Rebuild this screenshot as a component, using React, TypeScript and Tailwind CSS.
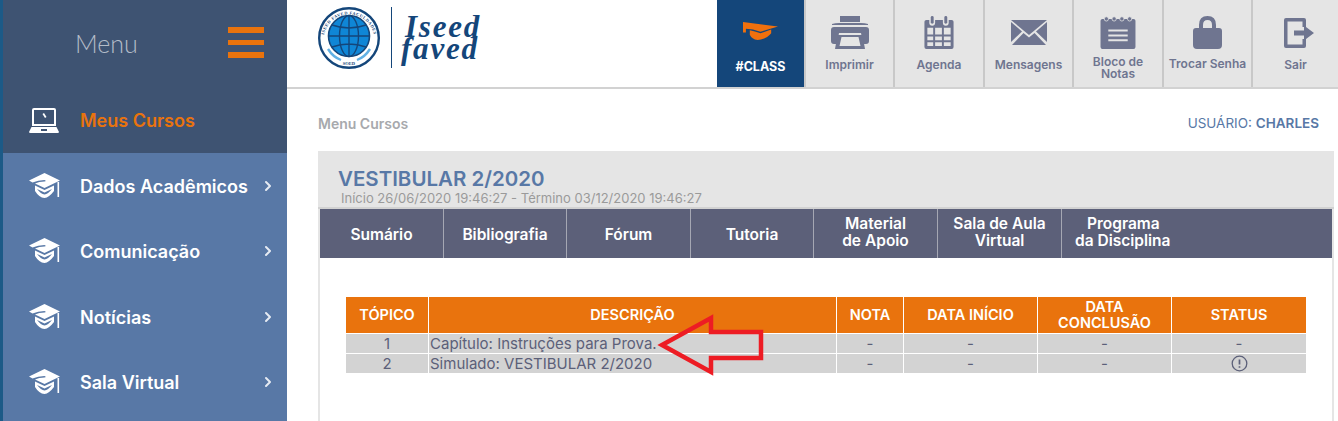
import React from 'react';
import { ChevronRight } from 'lucide-react';

const GradCap = () => (
  <svg width="32" height="26" viewBox="0 0 32 26" fill="white">
    <path d="M15.5 0 L31 7.5 L15.5 15 L6 10.5 Q10 8.5 15.5 8.5 L17 8 L15.5 7 Q9 7 3.5 9.5 L0 7.5 Z" />
    <path d="M6 12.5 L15.5 17 L25 12.5 L25 18 Q20 24.5 15.5 25 Q10 24.5 6 18 Z M8 16 Q12 21 15.5 21.5 Q19 21 23 16 L15.5 19.5 Z" fillRule="evenodd" />
    <rect x="28.5" y="9" width="1.6" height="15" />
  </svg>
);

const Laptop = () => (
  <svg width="30" height="25" viewBox="0 0 30 25" fill="white">
    <path fillRule="evenodd" d="M3 2 Q3 0 5 0 L25 0 Q27 0 27 2 L27 18 L3 18 Z M5 2 L5 16 L25 16 L25 2 Z" />
    <path d="M13.5 6 L15 5 L17.5 9 L16 10 Z" />
    <path fillRule="evenodd" d="M2.5 19 L27.5 19 L30 24 Q30 25 28.5 25 L1.5 25 Q0 25 0 24 Z M12 21 L12 23 L18 23 L18 21 Z" />
  </svg>
);

const SideItem = ({ label }: { label: string }) => (
  <div className="h-[65.5px] flex items-center pl-[26px] pr-[11px]">
    <GradCap />
    <span className="ml-[19px] pt-[1px] flex-1 text-[18px] font-semibold text-white">{label}</span>
    <ChevronRight size={16} strokeWidth={3} className="text-[#e6ebf3]" />
  </div>
);

const Sidebar = () => (
  <aside className="w-[287px] shrink-0 h-[421px] overflow-hidden bg-[#5878a6] border-l-[3px] border-[#1c5a87]">
    <div className="h-[87px] flex bg-[#3e5372]">
      <div className="w-[282px] flex items-center pl-[72px] pr-[21px] justify-between">
        <span className="text-[25px] font-light text-[#b4bcc8] leading-none font-['Lato',sans-serif]">Menu</span>
        <div className="w-[36px] flex flex-col gap-[7px] mt-[-3px]">
          <div className="h-[6px] bg-[#e9730d]" />
          <div className="h-[5px] bg-[#e9730d]" />
          <div className="h-[6px] bg-[#e9730d]" />
        </div>
      </div>
    </div>
    <div className="h-[66px] flex items-center pl-[26px] bg-[#3e5372]">
      <Laptop />
      <span className="ml-[21px] text-[18px] font-semibold text-[#e9730d]">Meus Cursos</span>
    </div>
    <SideItem label="Dados Acadêmicos" />
    <SideItem label="Comunicação" />
    <SideItem label="Notícias" />
    <SideItem label="Sala Virtual" />
  </aside>
);

const Logo = () => (
  <div className="flex items-center">
    <svg width="62" height="62" viewBox="0 0 62 62">
      <circle cx="31" cy="31" r="29.8" fill="white" stroke="#14467a" strokeWidth="2.4" />
      <circle cx="31" cy="29" r="20.5" fill="#0f86d6" stroke="#14467a" strokeWidth="1.6" />
      <g fill="none" stroke="#14467a" strokeWidth="1.4">
        <ellipse cx="31" cy="29" rx="9.5" ry="20.5" />
        <path d="M31 8.5 V49.5 M10.5 29 H51.5 M14 18 Q31 24 48 18 M14 40 Q31 34 48 40" />
      </g>
      <path d="M10 42 Q15 50 23 53" fill="none" stroke="#62b1e4" strokeWidth="2.4" />
      <path d="M52 42 Q47 50 39 53" fill="none" stroke="#62b1e4" strokeWidth="2.4" />
      <text x="31" y="57.5" textAnchor="middle" fontSize="4.5" fontWeight="700" fill="#14467a" fontFamily="Liberation Serif">SOED</text>
      <path id="logoArc" d="M5.5 33 A25.5 25.5 0 0 1 56.5 33" fill="none" />
      <text fontSize="4.3" fontWeight="700" fill="#14467a" fontFamily="Liberation Serif" letterSpacing="0.5">
        <textPath href="#logoArc" startOffset="50%" textAnchor="middle">ISEED FAVED FACULDADES</textPath>
      </text>
    </svg>
    <div className="w-px h-[61px] bg-[#14467a] ml-[11px]" />
    <div className="ml-[9px] mt-[1px] text-[#14467a] text-[31px] leading-[22px] font-bold italic tracking-[1.8px] indent-[4px] font-['Liberation_Serif',serif]">
      Iseed<br />faved
    </div>
  </div>
);

const PrinterIcon = () => (
  <svg width="38" height="33" viewBox="0 0 38 33" fill="#6f7590">
    <path d="M9 0 H29 V6 H9 Z" />
    <path d="M1 8 Q4 7 8 7 H30 Q34 7 37 8 V9 H1 Z" />
    <path fillRule="evenodd" d="M3 11 H35 Q38 11 38 14 V25 Q38 28 35 28 H32 L30 17 H8 L6 28 H3 Q0 28 0 25 V14 Q0 11 3 11 Z" />
    <path fillRule="evenodd" d="M6.5 19 H31.5 L34 33 H4 Z M10.5 21 L8.5 30 H29.5 L27.5 21 Z" />
  </svg>
);

const CalendarIcon = () => (
  <svg width="30" height="33" viewBox="0 0 30 34" fill="#6f7590">
    <path fillRule="evenodd" d="M2 4 H5 V7 Q5 10 8 10 Q11 10 11 7 V4 H19 V7 Q19 10 22 10 Q25 10 25 7 V4 H28 Q30 4 30 6 V32 Q30 34 28 34 H2 Q0 34 0 32 V6 Q0 4 2 4 Z M3 12 V19 H9 V12 Z M11 12 V19 H18 V12 Z M20 12 V19 H27 V12 Z M3 21 V25 H9 V21 Z M11 21 V25 H18 V21 Z M20 21 V25 H27 V21 Z M3 27 V31 H9 V27 Z M11 27 V31 H18 V27 Z M20 27 V31 H27 V27 Z" />
    <rect x="6.5" y="0" width="3" height="8" rx="1.5" />
    <rect x="20.5" y="0" width="3" height="8" rx="1.5" />
  </svg>
);

const MailIcon = () => (
  <svg width="36" height="25" viewBox="0 0 36 25" fill="#6f7590">
    <path d="M0 0 H36 L18 15 Z" />
    <path d="M0 2 L11 11.5 L0 22 Z" />
    <path d="M36 2 L25 11.5 L36 22 Z" />
    <path d="M12.5 13 L18 17.5 L23.5 13 L35 25 H1 Z" />
  </svg>
);

const NotesIcon = () => (
  <svg width="36" height="33" viewBox="0 0 36 34" fill="#6f7590">
    <path fillRule="evenodd" d="M2 3 H34 Q36 3 36 5 V32 Q36 34 34 34 H2 Q0 34 0 32 V5 Q0 3 2 3 Z M8 14 V16 H28 V14 Z M8 19 V21 H28 V19 Z M8 24 V26 H28 V24 Z" />
    <g fill="#6f7590" stroke="#e5e5e5" strokeWidth="0.8">
      <circle cx="6" cy="3" r="2.2" />
      <circle cx="14" cy="3" r="2.2" />
      <circle cx="22" cy="3" r="2.2" />
      <circle cx="30" cy="3" r="2.2" />
    </g>
  </svg>
);

const LockIcon = () => (
  <svg width="29" height="33" viewBox="0 0 29 33" fill="#6f7590">
    <path fillRule="evenodd" d="M6 12 V9 Q6 0 14.5 0 Q23 0 23 9 V12 H26 Q29 12 29 15 V29 Q29 33 25 33 H4 Q0 33 0 29 V15 Q0 12 3 12 Z M10 12 H19 V9 Q19 4 14.5 4 Q10 4 10 9 Z" />
  </svg>
);

const ExitIcon = () => (
  <svg className="ml-[7px]" width="30" height="30" viewBox="0 0 30 30" fill="#6f7590">
    <path d="M2 0 H20 Q22 0 22 2 V9 H18.5 V3.5 H3.5 V26.5 H18.5 V21 H22 V28 Q22 30 20 30 H2 Q0 30 0 28 V2 Q0 0 2 0 Z" />
    <path d="M10 12.5 H20 V7.5 L30 15 L20 22.5 V17.5 H10 Z" />
  </svg>
);

const ClassCap = () => (
  <svg width="35" height="18" viewBox="0 0 36 24" preserveAspectRatio="none" fill="#f0700d">
    <path d="M0 0 L36 6 L18 13 Q10 9 3 9 L3 14 L0 14 Z" />
    <path d="M7 11 Q12 12 18 15 L29 10 L29 15 Q24 23 15 24 Q9 23 7 17 Z" />
  </svg>
);

const headerTabs = [
  { label: 'Imprimir', icon: PrinterIcon, width: 'w-[89px]', labelClass: 'mt-[7px]' },
  { label: 'Agenda', icon: CalendarIcon, width: 'w-[90px]', labelClass: 'mt-[7px]' },
  { label: 'Mensagens', icon: MailIcon, width: 'w-[89px]', labelClass: 'mt-[7px]' },
  { label: 'Bloco de\nNotas', icon: NotesIcon, width: 'w-[90px]', labelClass: 'mt-[10px]' },
  { label: 'Trocar Senha', icon: LockIcon, width: 'w-[89px]', labelClass: 'mt-[6px]' },
  { label: 'Sair', icon: ExitIcon, width: 'w-[87px]', labelClass: 'mt-[7px]' },
];

const Header = () => (
  <header className="h-[89px] flex justify-between border-b-2 border-[#d2d2d2] pl-[31px]">
    <div className="flex items-center pb-[12px]"><Logo /></div>
    <div className="flex">
      <div className="w-[87px] bg-[#14467a] flex flex-col items-center">
        <div className="mt-[22px] h-[18px]"><ClassCap /></div>
        <span className="mt-[21px] text-[12.5px] font-bold text-white leading-none">#CLASS</span>
      </div>
      {headerTabs.map((tab) => {
        const Icon = tab.icon;
        return (
          <div key={tab.label} className={`${tab.width} bg-[#e5e5e5] border-l-2 border-[#c8c8c8] flex flex-col items-center`}>
            <div className="mt-[16px] h-[33px] flex items-center justify-center"><Icon /></div>
            <span className={`${tab.labelClass} h-[18px] flex items-center text-center whitespace-pre-line text-[12px] leading-[12px] font-semibold text-[#6f7590]`}>{tab.label}</span>
          </div>
        );
      })}
    </div>
  </header>
);

const courseTabs = [
  { label: 'Sumário', width: 'w-[124px]', offset: 'pt-[2px]' },
  { label: 'Bibliografia', width: 'w-[123px]', offset: 'pt-[2px]' },
  { label: 'Fórum', width: 'w-[124px]', offset: 'pt-[2px]' },
  { label: 'Tutoria', width: 'w-[123px]', offset: 'pt-[2px]' },
  { label: 'Material\nde Apoio', width: 'w-[124px]', offset: 'pb-[3px]' },
  { label: 'Sala de Aula\nVirtual', width: 'w-[124px]', offset: 'pb-[3px]' },
];

const CourseTabs = () => (
  <div className="h-[49px] flex bg-[#5c6079] text-white text-[15.5px] leading-[17px] font-semibold">
    {courseTabs.map((tab) => (
      <div key={tab.label} className={`${tab.width} ${tab.offset} border-r border-[#a5a7b3] flex items-center justify-center text-center whitespace-pre-line`}>
        {tab.label}
      </div>
    ))}
    <div className="w-[114px] flex flex-col justify-center pl-[13px] pb-[3px]">
      <span className="pl-[12px]">Programa</span>
      <span className="whitespace-nowrap">da Disciplina</span>
    </div>
  </div>
);

const columns = 'grid grid-cols-[82px_407px_66px_133px_133px_134px] gap-x-px';

const TopicTable = () => (
  <div className="relative w-[960px] text-[#5c6079]">
    <div className={`${columns} h-[36px] text-white text-[14.5px] leading-[16px] font-semibold text-center`}>
      {['TÓPICO', 'DESCRIÇÃO', 'NOTA', 'DATA INÍCIO', 'DATA CONCLUSÃO', 'STATUS'].map((title) => (
        <div key={title} className="bg-[#e9730d] flex items-center justify-center px-[10px]">{title}</div>
      ))}
    </div>
    {[
      { n: '1', text: 'Capítulo: Instruções para Prova.', status: '-' },
      { n: '2', text: 'Simulado: VESTIBULAR 2/2020', status: null },
    ].map((row) => (
      <div key={row.n} className={`${columns} h-[19px] mt-px text-[15px] leading-[19px] text-center`}>
        <div className="bg-[#d3d3d3]">{row.n}</div>
        <div className="bg-[#d3d3d3] text-left pl-[1px]">{row.text}</div>
        <div className="bg-[#d3d3d3]">-</div>
        <div className="bg-[#d3d3d3]">-</div>
        <div className="bg-[#d3d3d3]">-</div>
        <div className="bg-[#d3d3d3] flex items-center justify-center">
          {row.status ?? (
            <svg width="17" height="17" viewBox="0 0 17 17" fill="none" stroke="#5c6079">
              <circle cx="8.5" cy="8.5" r="7.3" strokeWidth="1.3" />
              <path d="M8.5 4.5 V9.5 M8.5 11.2 V12.7" strokeWidth="1.7" />
            </svg>
          )}
        </div>
      </div>
    ))}
    <svg className="absolute left-[310px] top-[17px]" width="110" height="62" viewBox="0 0 110 62" fill="none">
      <path d="M6 31 L55 4 V18 H105 V44 H55 V58 Z" stroke="#ed1c24" strokeWidth="4.5" />
    </svg>
  </div>
);

export default function App() {
  return (
    <div className="w-[1338px] h-[421px] overflow-hidden flex bg-white font-['Inter',sans-serif]">
      <Sidebar />
      <main className="flex-1 min-w-0">
        <Header />
        <div className="h-[62px] flex items-center justify-between pl-[31px] pr-[19px] pt-[7px]">
          <span className="text-[14px] font-semibold text-[#a7a9ad]">Menu Cursos</span>
          <span className="text-[#5878a6] text-[13.5px]">USUÁRIO: <b className="font-semibold">CHARLES</b></span>
        </div>
        <section className="ml-[31px] w-[1016px] h-[270px] border-x-2 border-[#e5e5e5]">
          <div className="h-[58px] bg-[#e5e5e5] border-b-2 border-[#d2d2d2] -mx-[2px] pl-[20px] pt-[16px]">
            <div className="text-[20.5px] leading-[24px] font-semibold text-[#5878a6]">VESTIBULAR 2/2020</div>
            <div className="pl-[3px] text-[13px] leading-[14px] text-[#9a9a9a]">Início 26/06/2020 19:46:27 - Término 03/12/2020 19:46:27</div>
          </div>
          <CourseTabs />
          <div className="pl-[26px] pt-[39px]"><TopicTable /></div>
        </section>
      </main>
    </div>
  );
}
